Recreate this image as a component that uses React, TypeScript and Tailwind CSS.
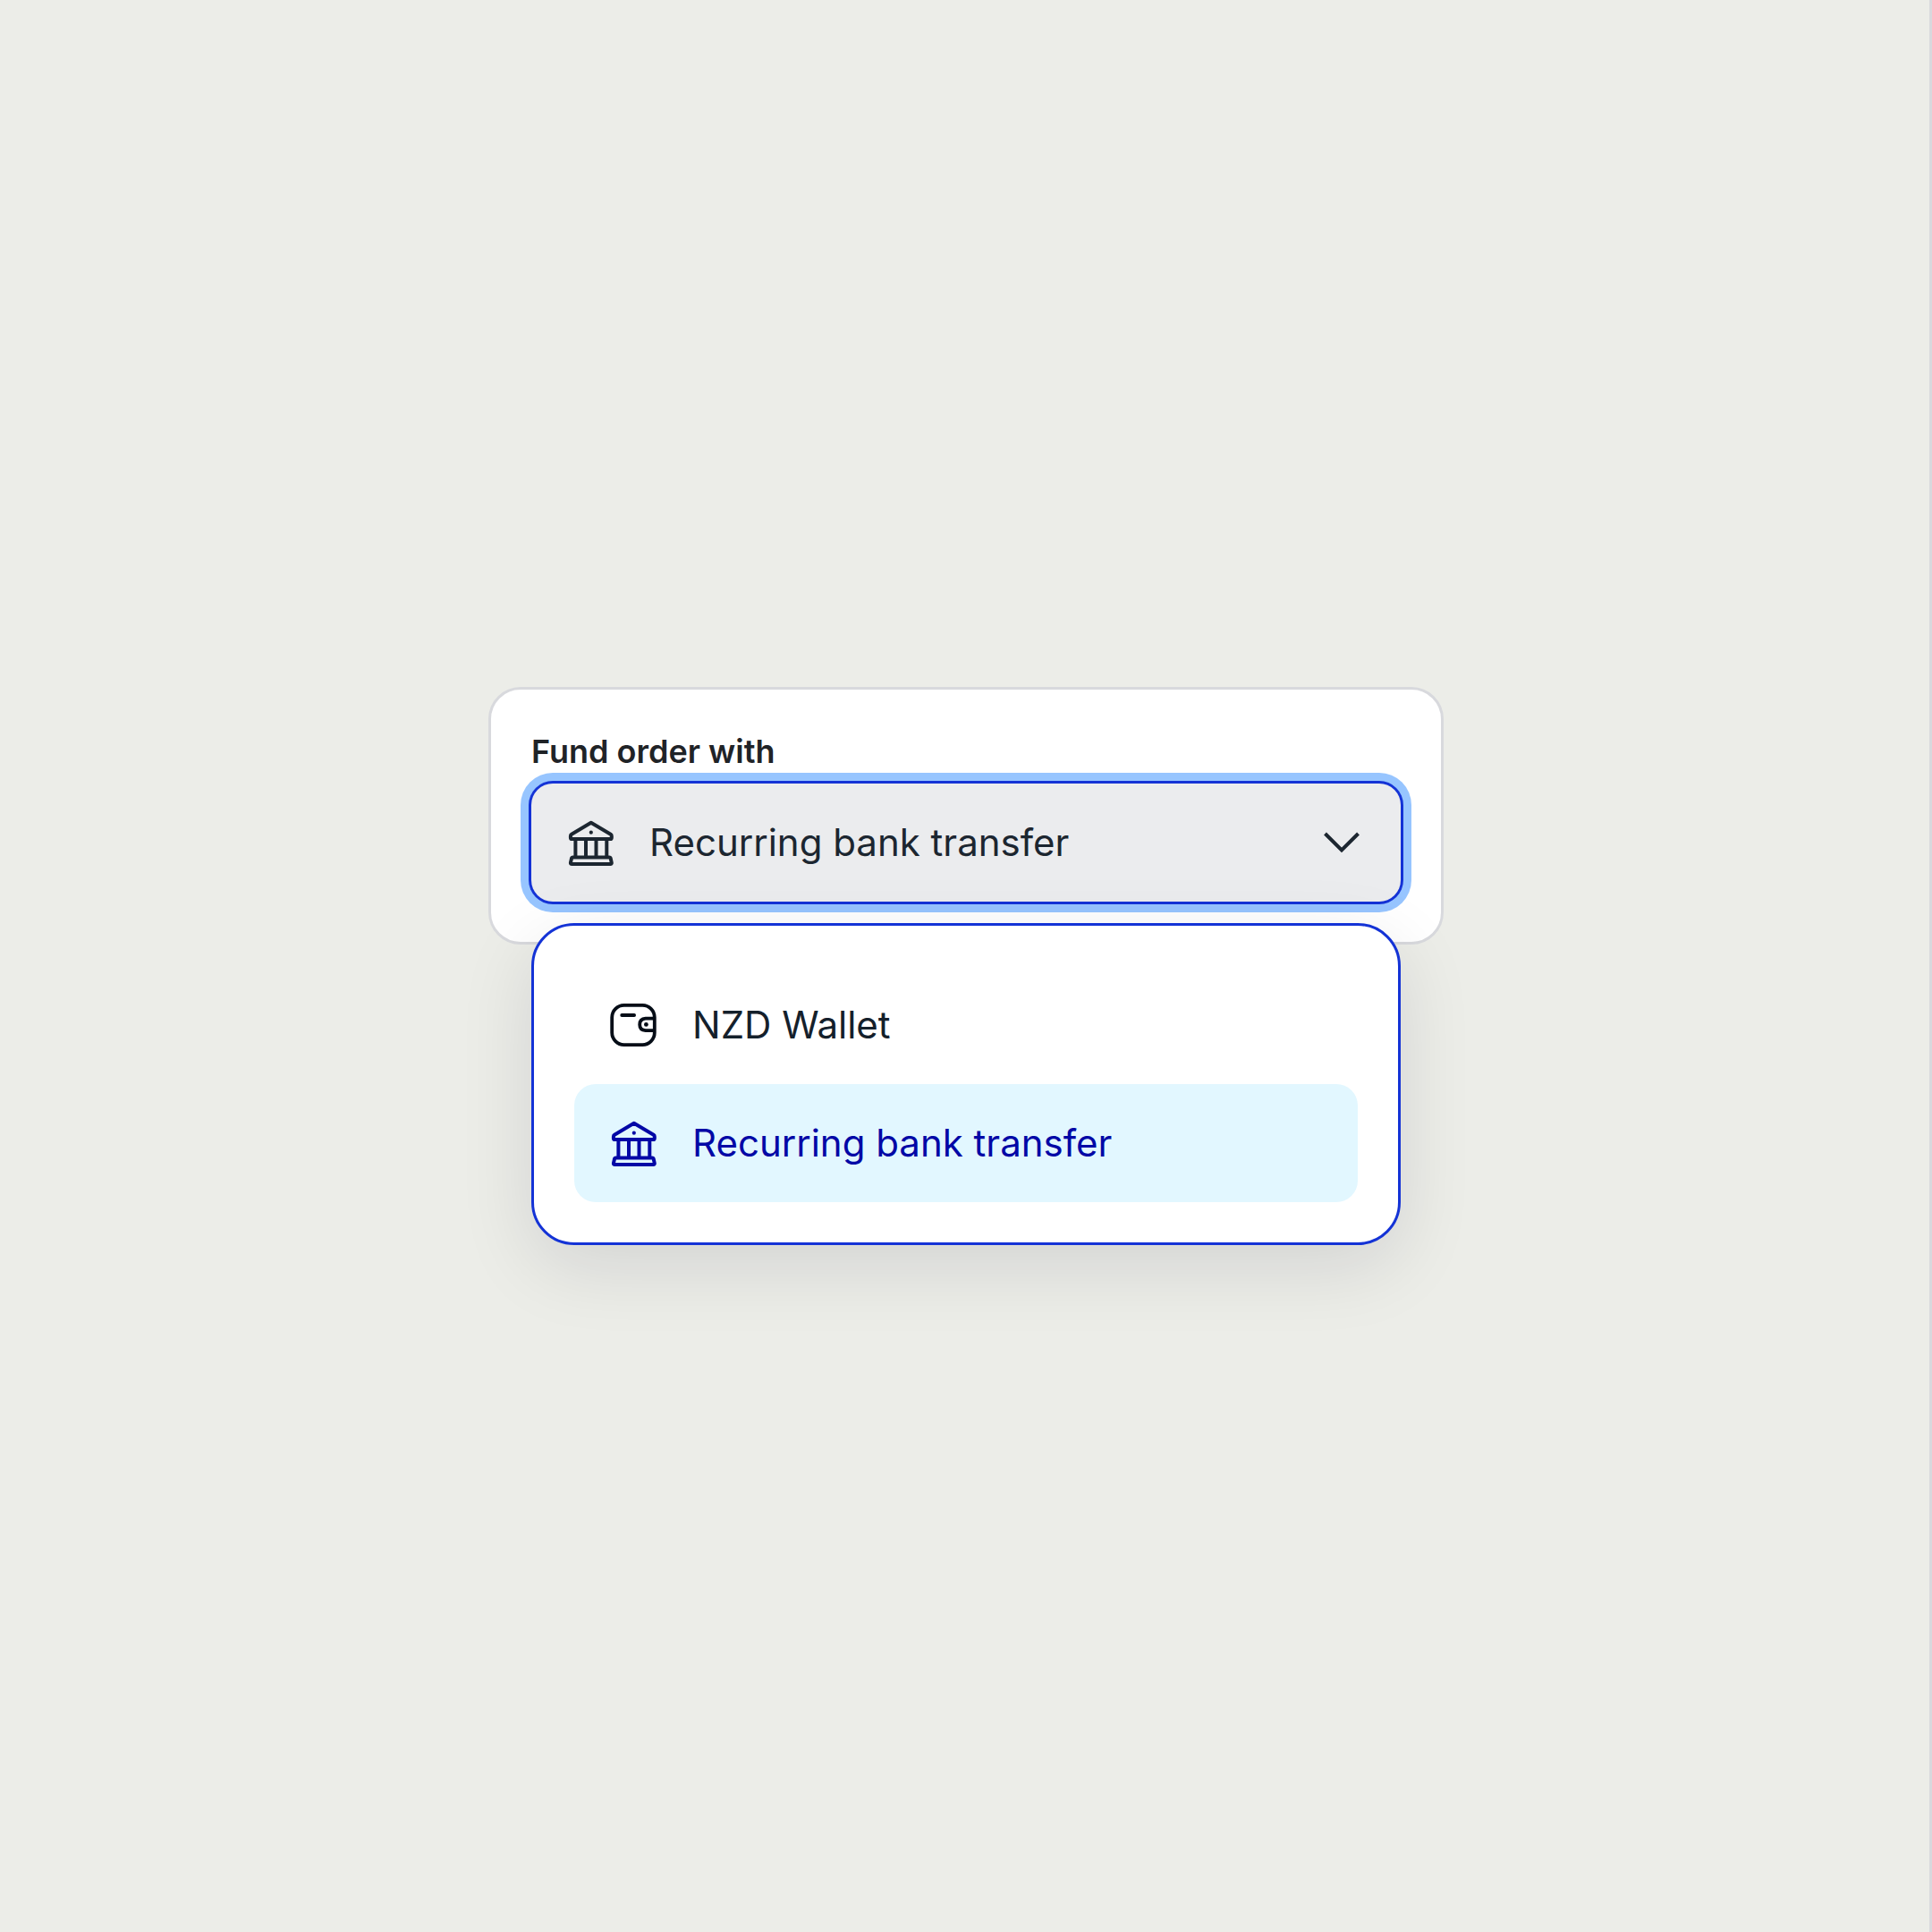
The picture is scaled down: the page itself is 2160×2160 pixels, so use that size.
import { useState } from "react";

type IconProps = { className?: string };

function BankIcon({ className }: IconProps) {
  return (
    <svg viewBox="0 0 60 60" fill="none" stroke="currentColor" strokeWidth="4" strokeLinejoin="round" className={className} aria-hidden="true">
      <path d="M30.8 7.7 9 20.8Q7.9 21.5 7.9 22.7V24.4Q7.9 26 9.5 26H52.2Q53.8 26 53.8 24.4V22.7Q53.8 21.5 52.7 20.8Z" />
      <path d="M13.4 26V46.4M25 26V46.4M36.5 26V46.4M48.3 26V46.4" />
      <path d="M10.6 46.4H51.1Q52.4 46.4 52.7 47.7L53.8 52.6Q54 54.1 52.4 54.1H9.3Q7.7 54.1 7.9 52.6L9 47.7Q9.3 46.4 10.6 46.4Z" />
      <circle cx="30.8" cy="18.7" r="2.1" fill="currentColor" stroke="none" />
    </svg>
  );
}

function WalletIcon({ className }: IconProps) {
  return (
    <svg viewBox="0 0 60 60" fill="none" stroke="currentColor" strokeWidth="3.8" strokeLinejoin="round" className={className} aria-hidden="true">
      <rect x="6.2" y="7.9" width="47.6" height="44.2" rx="13.5" />
      <path d="M17.2 19H31.1" strokeLinecap="round" />
      <path d="M53.8 22.7H43.8Q37.2 23.2 37.2 29.4Q37.2 35.6 43.8 36.1H53.8" />
      <circle cx="44.4" cy="29.4" r="2.4" fill="currentColor" stroke="none" />
    </svg>
  );
}

function ChevronIcon({ className }: IconProps) {
  return (
    <svg viewBox="0 0 60 60" fill="none" stroke="currentColor" strokeWidth="4" className={className} aria-hidden="true">
      <path d="M11.5 20 30 38.5 48.5 20" />
    </svg>
  );
}

const OPTIONS = [
  { id: "wallet", label: "NZD Wallet", Icon: WalletIcon },
  { id: "bank", label: "Recurring bank transfer", Icon: BankIcon },
];

export default function App() {
  const [open, setOpen] = useState(true);
  const [value, setValue] = useState("bank");
  const current = OPTIONS.find((o) => o.id === value) ?? OPTIONS[0];

  return (
    <main className="flex min-h-screen flex-col items-center justify-center bg-[#ecede8] px-6 font-['Inter',sans-serif] shadow-[inset_-3px_0_0_#d8d9dd]">
      <div className="w-full max-w-[1068px]">
        <div className="rounded-[36px] border-3 border-[#d8d9dd] bg-white p-[45px]">
          <label htmlFor="fund-source" className="mb-3 block text-[36px] leading-12 font-semibold text-[#1f2327]">
            Fund order with
          </label>
          <button
            id="fund-source"
            type="button"
            aria-haspopup="listbox"
            aria-expanded={open}
            onClick={() => setOpen(!open)}
            className="flex w-full items-center gap-9 rounded-3xl bg-[#ebecee] p-9 text-left text-[42px] leading-15 text-[#1c2630] shadow-[0_0_0_3px_#1433d6,0_0_0_12px_#97c5ff] outline-none"
          >
            <current.Icon className="size-15 shrink-0" />
            <span className="flex-1">{current.label}</span>
            <ChevronIcon className="size-15 shrink-0" />
          </button>
        </div>

        {open && (
          <div
            role="listbox"
            aria-label="Fund order with"
            className="relative mx-12 -mt-6 rounded-[48px] border-3 border-[#1433d6] bg-white p-[45px] shadow-[0_24px_84px_rgba(11,8,32,0.11)]"
          >
            {OPTIONS.map(({ id, label, Icon }) => (
              <button
                key={id}
                type="button"
                role="option"
                aria-selected={id === value}
                onClick={() => {
                  setValue(id);
                  setOpen(false);
                }}
                className="group flex w-full items-center gap-9 rounded-3xl p-9 text-left text-[42px] leading-15 text-[#14202b] aria-selected:bg-[#e2f7ff] aria-selected:text-[#0308a6]"
              >
                <Icon className="size-15 shrink-0 text-[#060d17] group-aria-selected:text-[#0308a6]" />
                <span>{label}</span>
              </button>
            ))}
          </div>
        )}
      </div>
    </main>
  );
}
